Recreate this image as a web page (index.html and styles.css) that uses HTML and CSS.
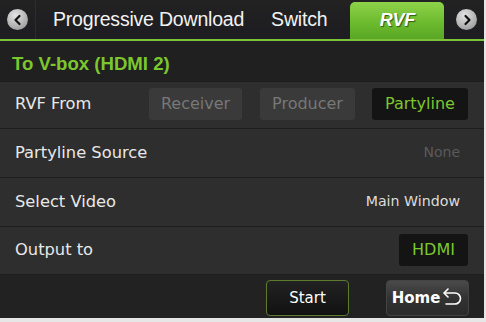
FILE: index.html
```html
<!DOCTYPE html>
<html>
<head>
<meta charset="utf-8">
<link rel="stylesheet" href="styles.css">
</head>
<body>
<div class="screen">
  <div class="tabbar">
    <div class="nav-btn left"><span class="circle"><svg width="12" height="12" viewBox="0 0 12 12"><path d="M7.5 2 L3.5 6 L7.5 10" fill="none" stroke="#111" stroke-width="2.2" stroke-linecap="round" stroke-linejoin="round"/></svg></span></div>
    <div class="tab">Progressive Download</div>
    <div class="tab">Switch</div>
    <div class="tab active">RVF</div>
    <div class="nav-btn right"><span class="circle"><svg width="12" height="12" viewBox="0 0 12 12"><path d="M4.5 2 L8.5 6 L4.5 10" fill="none" stroke="#111" stroke-width="2.2" stroke-linecap="round" stroke-linejoin="round"/></svg></span></div>
  </div>
  <div class="title">To V-box (HDMI 2)</div>
  <div class="rows">
    <div class="row">
      <span class="label">RVF From</span>
      <div class="opts">
        <span class="btn off">Receiver</span>
        <span class="btn off">Producer</span>
        <span class="btn on">Partyline</span>
      </div>
    </div>
    <div class="row">
      <span class="label">Partyline Source</span>
      <span class="value dim">None</span>
    </div>
    <div class="row">
      <span class="label">Select Video</span>
      <span class="value">Main Window</span>
    </div>
    <div class="row">
      <span class="label">Output to</span>
      <span class="btn on hdmi">HDMI</span>
    </div>
  </div>
  <div class="footer">
    <span class="fbtn start">Start</span>
    <span class="fbtn home">Home<svg width="22" height="20" viewBox="0 0 22 20"><path d="M7 2 L3 6 L7 10" fill="none" stroke="#fff" stroke-width="1.6" stroke-linejoin="round" stroke-linecap="round"/><path d="M3.5 6 H14 A5.5 5.5 0 0 1 14 17 H5" fill="none" stroke="#fff" stroke-width="1.6" stroke-linecap="round"/></svg></span>
  </div>
</div>
</body>
</html>
```
FILE: styles.css
```css
* { box-sizing: border-box; }
html, body { margin: 0; padding: 0; }
body {
  width: 486px;
  height: 322px;
  background: #e6e6e6;
  overflow: hidden;
}
.screen {
  width: 484px;
  height: 318px;
  background: #222;
  display: flex;
  flex-direction: column;
}
.tabbar {
  height: 41px;
  display: flex;
  align-items: flex-end;
  background: linear-gradient(#222 0%, #1d1d22 100%);
  border-bottom: 2px solid #7cc33a;
  font-family: "Liberation Sans", Arial, sans-serif;
  white-space: nowrap;
}
.nav-btn {
  height: 39px;
  flex-shrink: 0;
  display: flex;
  align-items: center;
  justify-content: center;
}
.nav-btn.left { width: 36px; border-right: 1px solid #2c2c2c; }
.nav-btn.right { width: 37px; margin-left: 4px; }
.circle {
  width: 21px;
  height: 21px;
  border-radius: 50%;
  background: radial-gradient(circle at 40% 30%, #e4e4e4 0%, #b4b4b4 55%, #8a8a8a 100%);
  display: flex;
  align-items: center;
  justify-content: center;
}
.tab {
  height: 39px;
  flex-shrink: 0;
  display: flex;
  align-items: center;
  color: #f2f2f2;
  font-size: 19.5px;
  letter-spacing: -0.2px;
}
.tab:nth-child(2) { margin-left: 17px; }
.tab:nth-child(3) { margin-left: 27px; }
.tab.active {
  margin-left: 23px;
  width: 94px;
  height: 37px;
  justify-content: center;
  border-radius: 5px 5px 0 0;
  background: linear-gradient(#8ed24a 0%, #6ab92d 60%, #5aa625 100%);
  color: #fff;
  font-weight: bold;
  font-style: italic;
  font-size: 18px;
  text-shadow: 1px 1px 1px #2d5a12;
}
.title {
  height: 40px;
  padding: 5px 0 0 12px;
  display: flex;
  align-items: center;
  color: #7cc72e;
  font-family: "Liberation Sans", Arial, sans-serif;
  font-weight: bold;
  font-size: 18.6px;
  background: #202020;
}
.rows {
  display: flex;
  flex-direction: column;
  font-family: "DejaVu Sans", Verdana, sans-serif;
}
.row {
  height: 49px;
  background: #2e2e2e;
  border-top: 1px solid #1e1e1e;
  display: flex;
  align-items: center;
  justify-content: space-between;
  padding: 0 16px 2px 15px;
}
.row:first-child { height: 47px; padding-bottom: 3px; }
.row:last-child { border-bottom: 1px solid #1e1e1e; }
.label {
  color: #e8e8e8;
  font-size: 16.3px;
}
.opts {
  display: flex;
  gap: 18px;
}
.btn {
  height: 32px;
  border-radius: 3px;
  display: flex;
  align-items: center;
  justify-content: center;
  font-size: 16px;
  padding: 0;
}
.btn.off { background: #3a3a3a; color: #777; width: 93px; }
.btn.off + .btn.off { width: 95px; }
.btn.on { background: #141414; color: #7cc72e; width: 96px; }
.btn.on.hdmi { width: 69px; }
.opts .btn.on { margin-left: -1px; }
.value {
  font-size: 14.2px;
  color: #dcdcdc;
  margin-right: 8px;
}
.value.dim { color: #5a5a5a; font-size: 14px; }
.footer {
  flex: 1;
  background: #222;
  display: flex;
  justify-content: flex-end;
  align-items: center;
  padding: 2px 15px 0 0;
  gap: 37px;
  font-family: "DejaVu Sans", Verdana, sans-serif;
}
.fbtn {
  width: 83px;
  height: 36px;
  border-radius: 4px;
  display: flex;
  align-items: center;
  justify-content: center;
  font-size: 15px;
  color: #fff;
}
.start {
  border: 1px solid #5d7a2e;
  background: linear-gradient(#222 0%, #111 100%);
}
.home {
  background: linear-gradient(#4a4a4a 0%, #333 50%, #2a2a2a 100%);
  border: 1px solid #444;
  font-weight: bold;
  gap: 1px;
}
.home svg { margin-top: -2px; }
```
